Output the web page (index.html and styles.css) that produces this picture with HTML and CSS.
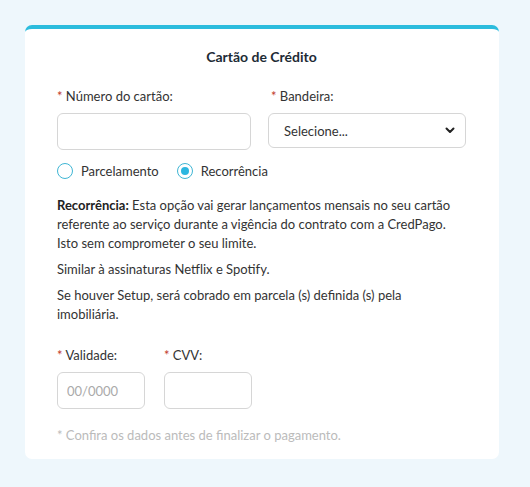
FILE: index.html
```html
<!DOCTYPE html>
<html lang="pt-BR">
<head>
<meta charset="UTF-8">
<meta name="viewport" content="width=device-width, initial-scale=1.0">
<title>Cartão de Crédito</title>
<link rel="stylesheet" href="styles.css">
</head>
<body>
<div class="card">
    <h2 class="card-title">Cartão de Crédito</h2>
    <div class="row two">
        <div class="field">
            <label for="numero"><span class="req">*</span> Número do cartão:</label>
            <input type="text" id="numero" class="input">
        </div>
        <div class="field">
            <label for="bandeira"><span class="req">*</span> Bandeira:</label>
            <div class="select">
                <span>Selecione...</span>
                <svg width="10" height="7" viewBox="0 0 10 7"><path d="M1.5 1.5 L5 5 L8.5 1.5" fill="none" stroke="#222" stroke-width="2" stroke-linecap="round" stroke-linejoin="round"/></svg>
            </div>
        </div>
    </div>
    <div class="radios">
        <label class="radio"><span class="dot"></span> Parcelamento</label>
        <label class="radio checked"><span class="dot"></span> Recorrência</label>
    </div>
    <div class="info">
        <p><b>Recorrência:</b> Esta opção vai gerar lançamentos mensais no seu cartão referente ao serviço durante a vigência do contrato com a CredPago. Isto sem comprometer o seu limite.</p>
        <p>Similar à assinaturas Netflix e Spotify.</p>
        <p>Se houver Setup, será cobrado em parcela (s) definida (s) pela imobiliária.</p>
    </div>
    <div class="row small">
        <div class="field">
            <label for="validade"><span class="req">*</span> Validade:</label>
            <input type="text" id="validade" class="input short" placeholder="00/0000">
        </div>
        <div class="field">
            <label for="cvv"><span class="req">*</span> CVV:</label>
            <input type="text" id="cvv" class="input short">
        </div>
    </div>
    <p class="note">* Confira os dados antes de finalizar o pagamento.</p>
</div>
</body>
</html>
```

FILE: styles.css
```css
body {
    font-family: Lato, "Open Sans", sans-serif;
    font-size: 13px;
    color: #333;
    background-color: #eef7fc;
    margin: 0;
    padding: 25px 31px 27px 25px;
}
.card {
    background-color: #fff;
    border-top: 4px solid #2bbcdd;
    border-radius: 7px;
    padding: 19px 33px 16px 32px;
    height: 395px;
}
.card-title {
    font-size: 14px;
    font-weight: bold;
    color: #1d2b36;
    text-align: center;
    margin: 0 0 22px;
}
.row {
    display: grid;
    gap: 20px;
}
.row.two {
    grid-template-columns: 194px 195px;
}
.row.small {
    grid-template-columns: 88px 88px;
    gap: 19px;
    margin-top: 22px;
}
.field label {
    display: block;
    margin-bottom: 8px;
    line-height: 18px;
}
.req {
    color: #c0392b;
}
.input {
    display: block;
    box-sizing: border-box;
    width: 100%;
    height: 37px;
    border: 1px solid #d6d6d6;
    border-radius: 6px;
    padding: 0 9px;
    font-family: inherit;
    font-size: 13px;
    color: #555;
}
.input::placeholder {
    color: #aaa;
}
.select {
    box-sizing: border-box;
    height: 35px;
    margin-left: -3px;
    border: 1px solid #d6d6d6;
    border-radius: 6px;
    padding: 0 10px 0 15px;
    display: flex;
    align-items: center;
    justify-content: space-between;
    color: #333;
}
.radios {
    display: flex;
    gap: 18px;
    margin-top: 13px;
}
.radio {
    display: flex;
    align-items: center;
    gap: 8px;
}
.dot {
    box-sizing: border-box;
    width: 16px;
    height: 16px;
    border-radius: 50%;
    border: 1px solid #3fb6d4;
    position: relative;
}
.radio.checked .dot::after {
    content: "";
    position: absolute;
    left: 3px;
    top: 3px;
    width: 8px;
    height: 8px;
    border-radius: 50%;
    background-color: #2bb6e0;
}
.info {
    margin-top: 17px;
    line-height: 19px;
    color: #333;
}
.info p {
    margin: 0 0 7px;
}
.info b {
    color: #222;
}
.note {
    color: #bbb;
    margin: 18px 0 0;
}
```
